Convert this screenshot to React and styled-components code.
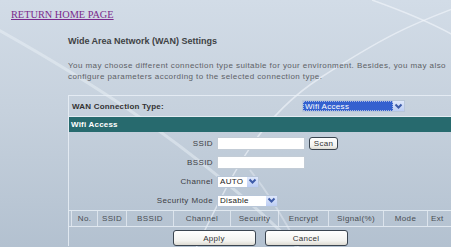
import styled, { createGlobalStyle } from "styled-components";

const GlobalStyle = createGlobalStyle`
  html, body {
    margin: 0;
    padding: 0;
  }
  body {
    font-family: "Liberation Sans", Arial, sans-serif;
  }
`;

const columns = [
  { label: "", width: 3 },
  { label: "No.", width: 26 },
  { label: "SSID", width: 29 },
  { label: "BSSID", width: 47 },
  { label: "Channel", width: 57 },
  { label: "Security", width: 48 },
  { label: "Encrypt", width: 50 },
  { label: "Signal(%)", width: 55 },
  { label: "Mode", width: 44 },
  { label: "Ext", width: 23, start: true },
];

const Chevron = () => (
  <svg width="9" height="7" viewBox="0 0 9 7">
    <polyline
      points="1.5,1.5 4.5,4.5 7.5,1.5"
      fill="none"
      stroke="#3d5ba8"
      strokeWidth="2"
    />
  </svg>
);

const App = () => {
  return (
    <Page>
      <GlobalStyle />
      <Decor viewBox="0 0 451 247" preserveAspectRatio="none">
        <path d="M -5 28 C 70 70, 190 140, 300 250" stroke="#eef3f8" strokeOpacity="0.45" strokeWidth="3" fill="none" />
        <path d="M 195 250 C 230 180, 255 120, 320 78 S 410 25, 455 8" stroke="#f4f7fb" strokeOpacity="0.6" strokeWidth="1.5" fill="none" />
        <path d="M 372 0 C 400 10, 430 22, 455 36" stroke="#f4f7fb" strokeOpacity="0.6" strokeWidth="1.5" fill="none" />
        <path d="M 250 170 C 270 195, 285 220, 300 250" stroke="#f4f7fb" strokeOpacity="0.35" strokeWidth="2" fill="none" />
      </Decor>
      <Content>
        <HomeLink href="#">RETURN HOME PAGE</HomeLink>
        <Main>
          <Title>Wide Area Network (WAN) Settings</Title>
          <Description>
            You may choose different connection type suitable for your environment. Besides, you may also
            <br />
            configure parameters according to the selected connection type.
          </Description>
          <Table>
            <WanRow>
              <WanLabel>WAN Connection Type:</WanLabel>
              <SelectBox $width={103}>
                <SelectValue $highlight>Wifi Access</SelectValue>
                <ArrowBox>
                  <Chevron />
                </ArrowBox>
              </SelectBox>
            </WanRow>
            <SectionBar>Wifi Access</SectionBar>
            <Form>
              <FormRow>
                <FieldLabel>SSID</FieldLabel>
                <Field>
                  <TextInput />
                  <SmallButton>Scan</SmallButton>
                </Field>
              </FormRow>
              <FormRow>
                <FieldLabel>BSSID</FieldLabel>
                <Field>
                  <TextInput />
                </Field>
              </FormRow>
              <FormRow>
                <FieldLabel>Channel</FieldLabel>
                <Field>
                  <SelectBox $width={42}>
                    <SelectValue>AUTO</SelectValue>
                    <ArrowBox>
                      <Chevron />
                    </ArrowBox>
                  </SelectBox>
                </Field>
              </FormRow>
              <FormRow>
                <FieldLabel>Security Mode</FieldLabel>
                <Field>
                  <SelectBox $width={61}>
                    <SelectValue>Disable</SelectValue>
                    <ArrowBox>
                      <Chevron />
                    </ArrowBox>
                  </SelectBox>
                </Field>
              </FormRow>
            </Form>
            <HeaderRow>
              {columns.map((col, i) => (
                <HeaderCell key={i} $width={col.width} $start={col.start}>
                  {col.label}
                </HeaderCell>
              ))}
            </HeaderRow>
            <ButtonRow>
              <Button>Apply</Button>
              <Button>Cancel</Button>
            </ButtonRow>
          </Table>
        </Main>
      </Content>
    </Page>
  );
};

const Page = styled.div`
  position: relative;
  width: 451px;
  height: 247px;
  overflow: hidden;
  background: linear-gradient(180deg, #d2dce7 0%, #c6d1dd 45%, #b3c1d0 100%);
`;

const Decor = styled.svg`
  position: absolute;
  top: 0;
  left: 0;
  width: 451px;
  height: 247px;
  pointer-events: none;
`;

const Content = styled.div`
  position: relative;
  display: flex;
  flex-direction: column;
  align-items: flex-start;
  padding-top: 9px;
`;

const HomeLink = styled.a`
  display: block;
  margin-left: 11px;
  font-family: "Liberation Serif", "Times New Roman", serif;
  font-size: 10.3px;
  line-height: 12px;
  color: #7b2a8c;
  text-decoration: underline;
`;

const Main = styled.div`
  margin-left: 68px;
  width: 383px;
`;

const Title = styled.div`
  margin-top: 15px;
  font-size: 9px;
  line-height: 11px;
  font-weight: bold;
  color: #3f4245;
`;

const Description = styled.div`
  margin-top: 13px;
  font-size: 8px;
  line-height: 11px;
  letter-spacing: 0.43px;
  color: #5d6166;
  white-space: nowrap;
`;

const Table = styled.div`
  margin-top: 13px;
  display: flex;
  flex-direction: column;
  border-top: 1px solid rgba(235, 241, 247, 0.8);
  border-left: 1px solid rgba(235, 241, 247, 0.8);
`;

const WanRow = styled.div`
  height: 20px;
  display: flex;
  align-items: center;
  justify-content: space-between;
  padding: 0 46px 0 3px;
  border-bottom: 1px solid rgba(235, 241, 247, 0.8);
`;

const WanLabel = styled.span`
  font-size: 8px;
  font-weight: bold;
  letter-spacing: 0.2px;
  color: #333;
`;

const SectionBar = styled.div`
  height: 15px;
  display: flex;
  align-items: center;
  padding-left: 2px;
  background: #276a6e;
  color: #fff;
  font-size: 8px;
  font-weight: bold;
  letter-spacing: 0.2px;
`;

const Form = styled.div`
  padding-top: 2px;
  display: flex;
  flex-direction: column;
`;

const FormRow = styled.div`
  height: 19px;
  display: flex;
  align-items: center;
  gap: 4px;
`;

const FieldLabel = styled.span`
  width: 144px;
  text-align: right;
  font-size: 8px;
  letter-spacing: 0.4px;
  color: #3d4044;
`;

const Field = styled.div`
  display: flex;
  align-items: center;
  gap: 4px;
`;

const TextInput = styled.div`
  width: 86px;
  height: 11px;
  background: #fff;
  border: 1px solid #c3ccd6;
`;

const SelectBox = styled.div`
  width: ${(p) => p.$width}px;
  height: 12px;
  box-sizing: border-box;
  display: flex;
  background: #fff;
  border: 1px solid #b8c6d8;
`;

const SelectValue = styled.span`
  flex: 1;
  display: flex;
  align-items: center;
  padding-left: 2px;
  font-size: 8px;
  letter-spacing: 0.3px;
  color: ${(p) => (p.$highlight ? "#fff" : "#222")};
  background: ${(p) => (p.$highlight ? "#3461cf" : "transparent")};
  outline: ${(p) => (p.$highlight ? "1px dotted #a9b8e0" : "none")};
  outline-offset: -1px;
`;

const ArrowBox = styled.span`
  width: 11px;
  display: flex;
  align-items: center;
  justify-content: center;
  background: linear-gradient(180deg, #dfe8fb 0%, #bccdf3 100%);
`;

const buttonLook = `
  box-sizing: border-box;
  display: flex;
  align-items: center;
  justify-content: center;
  border: 1px solid #3b4550;
  border-radius: 3px;
  background: linear-gradient(180deg, #ffffff 0%, #f3f3f0 70%, #dedbd2 100%);
  font-family: "Liberation Sans", Arial, sans-serif;
  font-size: 8px;
  letter-spacing: 0.3px;
  color: #333;
  padding: 0;
`;

const SmallButton = styled.button`
  ${buttonLook}
  width: 29px;
  height: 13px;
`;

const HeaderRow = styled.div`
  height: 15px;
  display: flex;
  border-top: 1px solid rgba(235, 241, 247, 0.8);
  border-bottom: 1px solid rgba(235, 241, 247, 0.8);
`;

const HeaderCell = styled.div`
  width: ${(p) => p.$width}px;
  flex: none;
  box-sizing: border-box;
  display: flex;
  align-items: center;
  justify-content: ${(p) => (p.$start ? "flex-start" : "center")};
  padding-left: ${(p) => (p.$start ? "3px" : "0")};
  border-right: ${(p) => (p.$start ? "none" : "1px solid rgba(235, 241, 247, 0.7)")};
  font-size: 8px;
  letter-spacing: 0.35px;
  color: #4a4e53;
`;

const ButtonRow = styled.div`
  display: flex;
  justify-content: center;
  gap: 9px;
  padding-top: 3px;
`;

const Button = styled.button`
  ${buttonLook}
  width: 83px;
  height: 16px;
`;

export default App;
